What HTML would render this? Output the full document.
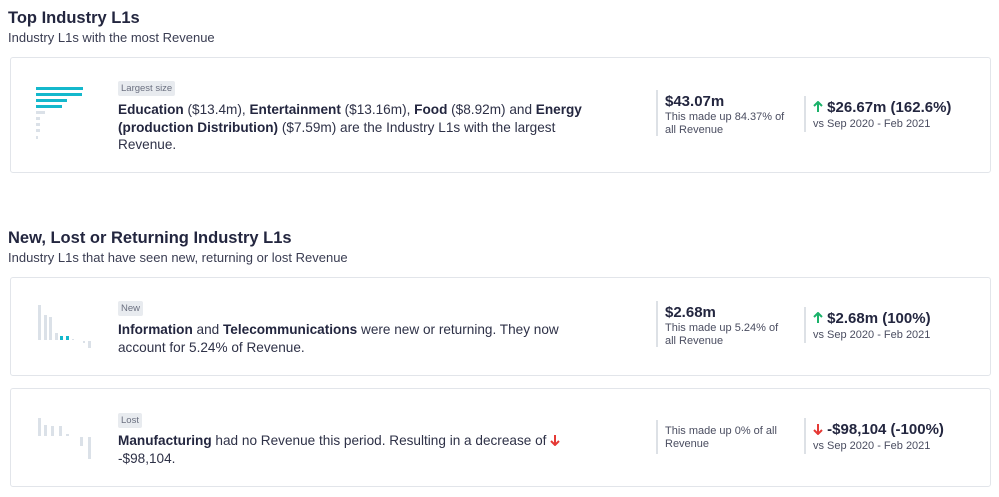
<!DOCTYPE html>
<html><head><style>
body{margin:0;width:999px;height:497px;background:#fff;font-family:"Liberation Sans",sans-serif;color:#2a2d45;position:relative;overflow:hidden}
h2{position:absolute;margin:0;font-size:16.5px;font-weight:bold;color:#23263f}
.sub{position:absolute;font-size:13px;color:#3a3d52}
.card{position:absolute;left:10px;width:979px;border:1px solid #e2e5ea;border-radius:3px;background:#fff}
.tag{position:absolute;font-size:9.5px;color:#6b7080;background:#e8ebef;padding:2px 3px;border-radius:2px}
.txt{position:absolute;left:118px;font-size:13.6px;line-height:17.5px;color:#2e3147;white-space:nowrap}
.txt b{color:#23263f}
.st{position:absolute;border-left:2px solid #dde1e6;padding-left:7px;height:46px}
.big{font-size:15px;font-weight:bold;color:#23263f;white-space:nowrap}
.sm{font-size:11px;color:#4a4d60;line-height:13px;white-space:nowrap}
.b{position:absolute;background:#dbe1e8}
.t{position:absolute;background:#14b8cc}
svg{vertical-align:-1px}
</style></head><body>
<h2 style="left:8px;top:9px">Top Industry L1s</h2>
<div class="sub" style="left:8px;top:30px">Industry L1s with the most Revenue</div>
<div class="card" style="top:57px;height:114px"></div>
<div class="t" style="left:36px;top:87px;width:47px;height:3px"></div>
<div class="t" style="left:36px;top:93px;width:46px;height:3px"></div>
<div class="t" style="left:36px;top:99px;width:31px;height:3px"></div>
<div class="t" style="left:36px;top:105px;width:26px;height:3px"></div>
<div class="b" style="left:36px;top:111px;width:9px;height:3px"></div>
<div class="b" style="left:36px;top:117px;width:4px;height:3px"></div>
<div class="b" style="left:36px;top:123px;width:4px;height:3px"></div>
<div class="b" style="left:36px;top:129px;width:4px;height:3px"></div>
<div class="b" style="left:36px;top:136px;width:2px;height:3px"></div>
<div class="tag" style="left:118px;top:81px">Largest size</div>
<div class="txt" style="top:101px"><b>Education</b> ($13.4m), <b>Entertainment</b> ($13.16m), <b>Food</b> ($8.92m) and <b>Energy</b><br><b>(production Distribution)</b> ($7.59m) are the Industry L1s with the largest<br>Revenue.</div>
<div class="st" style="left:656px;top:90px"><div class="big" style="margin-top:3px">$43.07m</div><div class="sm" style="margin-top:1px">This made up 84.37% of<br>all Revenue</div></div>
<div class="st" style="left:804px;top:96px;height:36px"><div class="big" style="margin-top:3px"><svg width="10" height="12" viewBox="0 0 10 12"><path d="M5 11V1M1 5l4-4 4 4" stroke="#1bb26a" stroke-width="2" fill="none"/></svg> $26.67m (162.6%)</div><div class="sm" style="margin-top:2px">vs Sep 2020 - Feb 2021</div></div>

<h2 style="left:8px;top:229px">New, Lost or Returning Industry L1s</h2>
<div class="sub" style="left:8px;top:250px">Industry L1s that have seen new, returning or lost Revenue</div>
<div class="card" style="top:277px;height:97px"></div>
<div class="b" style="left:38px;top:305px;width:3px;height:35px"></div>
<div class="b" style="left:44px;top:315px;width:3px;height:25px"></div>
<div class="b" style="left:49px;top:317px;width:3px;height:23px"></div>
<div class="b" style="left:55px;top:333px;width:3px;height:7px"></div>
<div class="t" style="left:60px;top:336px;width:3px;height:4px"></div>
<div class="t" style="left:66px;top:336px;width:3px;height:4px"></div>
<div class="b" style="left:72px;top:339px;width:2px;height:1px"></div>
<div class="b" style="left:83px;top:341px;width:2px;height:2px"></div>
<div class="b" style="left:88px;top:341px;width:3px;height:7px"></div>
<div class="tag" style="left:118px;top:301px">New</div>
<div class="txt" style="top:321px"><b>Information</b> and <b>Telecommunications</b> were new or returning. They now<br>account for 5.24% of Revenue.</div>
<div class="st" style="left:656px;top:301px"><div class="big" style="margin-top:3px">$2.68m</div><div class="sm" style="margin-top:1px">This made up 5.24% of<br>all Revenue</div></div>
<div class="st" style="left:804px;top:307px;height:36px"><div class="big" style="margin-top:3px"><svg width="10" height="12" viewBox="0 0 10 12"><path d="M5 11V1M1 5l4-4 4 4" stroke="#1bb26a" stroke-width="2" fill="none"/></svg> $2.68m (100%)</div><div class="sm" style="margin-top:2px">vs Sep 2020 - Feb 2021</div></div>

<div class="card" style="top:388px;height:97px"></div>
<div class="b" style="left:38px;top:418px;width:3px;height:18px"></div>
<div class="b" style="left:44px;top:425px;width:3px;height:11px"></div>
<div class="b" style="left:51px;top:426px;width:3px;height:10px"></div>
<div class="b" style="left:59px;top:426px;width:3px;height:10px"></div>
<div class="b" style="left:66px;top:434px;width:3px;height:2px"></div>
<div class="b" style="left:80px;top:437px;width:3px;height:9px"></div>
<div class="b" style="left:88px;top:437px;width:3px;height:22px"></div>
<div class="tag" style="left:118px;top:413px">Lost</div>
<div class="txt" style="top:432px"><b>Manufacturing</b> had no Revenue this period. Resulting in a decrease of <svg width="10" height="12" viewBox="0 0 10 12"><path d="M5 1v10M1 7l4 4 4-4" stroke="#e53935" stroke-width="2" fill="none"/></svg><br>-$98,104.</div>
<div class="st" style="left:656px;top:420px;height:34px"><div class="sm" style="margin-top:5px">This made up 0% of all<br>Revenue</div></div>
<div class="st" style="left:804px;top:418px;height:36px"><div class="big" style="margin-top:3px"><svg width="10" height="12" viewBox="0 0 10 12"><path d="M5 1v10M1 7l4 4 4-4" stroke="#e53935" stroke-width="2" fill="none"/></svg> -$98,104 (-100%)</div><div class="sm" style="margin-top:2px">vs Sep 2020 - Feb 2021</div></div>
</body></html>
